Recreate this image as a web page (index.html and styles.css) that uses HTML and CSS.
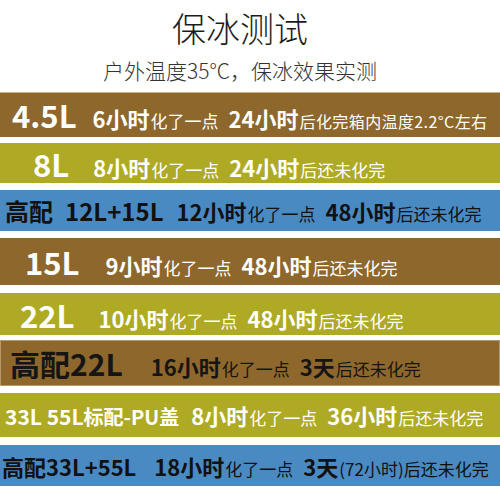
FILE: index.html
```html
<!DOCTYPE html>
<html>
<head>
<title>保冰测试</title>
<meta charset="utf-8"/>
<link rel="stylesheet" href="styles.css">
</head>
<body>

<div id="head">
  <h1>保冰测试</h1>
  <p>户外温度35°C，保冰效果实测</p>
</div>

<ul id="tests">
  <li class="bar brown h1"><div class="line">
    <b class="big l1">4.5L</b>
    <b class="hr first">6小时</b><span class="note">化了一点</span>
    <b class="hr">24小时</b><span class="note tail">后化完箱内温度2.2°C左右</span>
  </div></li>
  <li class="bar olive h2"><div class="line">
    <b class="big l2">8L</b>
    <b class="hr first">8小时</b><span class="note">化了一点</span>
    <b class="hr">24小时</b><span class="note">后还未化完</span>
  </div></li>
  <li class="bar blue h3"><div class="line">
    <b class="mid l3">高配</b><b class="mid l3b">12L+15L</b>
    <b class="hr first">12小时</b><span class="note">化了一点</span>
    <b class="hr">48小时</b><span class="note">后还未化完</span>
  </div></li>
  <li class="bar brown h4"><div class="line">
    <b class="big l4">15L</b>
    <b class="hr first">9小时</b><span class="note">化了一点</span>
    <b class="hr">48小时</b><span class="note">后还未化完</span>
  </div></li>
  <li class="bar olive h5"><div class="line">
    <b class="big l5">22L</b>
    <b class="hr first">10小时</b><span class="note">化了一点</span>
    <b class="hr">48小时</b><span class="note">后还未化完</span>
  </div></li>
  <li class="bar brown dark h6"><div class="line">
    <b class="big l6">高配22L</b>
    <b class="hr first">16小时</b><span class="note">化了一点</span>
    <b class="hr">3天</b><span class="note">后还未化完</span>
  </div></li>
  <li class="bar olive h7"><div class="line">
    <b class="mid l7">33L 55L<span class="std">标配-PU盖</span></b>
    <b class="hr first">8小时</b><span class="note">化了一点</span>
    <b class="hr">36小时</b><span class="note">后还未化完</span>
  </div></li>
  <li class="bar blue h8"><div class="line">
    <b class="mid l8">高配33L+55L</b>
    <b class="hr first">18小时</b><span class="note">化了一点</span>
    <b class="hr">3天</b><span class="note">(72小时)后还未化完</span>
  </div></li>
</ul>

</body>
</html>
```

FILE: styles.css
```css
body {
    margin: 0;
    font-family: "Noto Sans CJK SC", "Noto Sans", sans-serif;
    background: #fff;
    color: #222;
}
ul { list-style:none; margin:0; padding:0; }

#head { padding: 10px 20px 0 0; text-align: center; }
#head h1 {
    margin: 0;
    font-size: 34px;
    line-height: 36px;
    font-weight: 300;
    color: #1c1c1c;
}
#head p {
    margin: 12px 0 0;
    font-size: 21px;
    line-height: 24px;
    font-weight: 300;
    color: #333;
}

#tests { margin-top: 10px; }

.bar {
    display: flex;
    align-items: center;
    white-space: nowrap;
    color: #fff;
}
.line {
    display: flex;
    align-items: baseline;
    line-height: 1;
}
.brown { background: #8d672c; }
.olive { background: #aeaa23; }
.blue { background: #4a8ac2; color: #111; }
.dark { color: #151515; box-shadow: inset 0 0 0 1px #b39a68; }

.h1 { height: 45px; margin-bottom: 6px; box-shadow: inset 0 1px 0 #c8b387; }
.h2 { height: 40px; margin-bottom: 7px; }
.h3 { height: 41px; margin-bottom: 7px; }
.h4 { height: 47px; margin-bottom: 8px; }
.h5 { height: 42px; margin-bottom: 5px; }
.h6 { height: 46px; margin-bottom: 7px; }
.h7 { height: 44px; margin-bottom: 8px; }
.h8 { height: 41px; }

.big { font-size: 31px; font-weight: 700; }
.mid { font-size: 24px; font-weight: 700; }
.hr { font-size: 22px; font-weight: 700; margin-left: 10px; }
.hr.first { margin-left: 0; }
.note { font-size: 17px; margin-left: 1px; }
.tail { font-size: 16px; letter-spacing: 0.4px; }
.std { font-size: 20px; }

.l1 { margin: 0 16px 0 12px; }
.l2 { margin: 0 24px 0 33px; }
.l3 { margin: 0 12px 0 5px; }
.l3b { margin-right: 13px; }
.l4 { margin: 0 26px 0 25px; }
.l5 { margin: 0 24px 0 20px; }
.l6 { margin: 0 28px 0 10px; font-size: 30px; }
.l7 { margin: 0 12px 0 5px; font-size: 21px; }
.l8 { margin: 0 18px 0 2px; font-size: 22px; }
```
